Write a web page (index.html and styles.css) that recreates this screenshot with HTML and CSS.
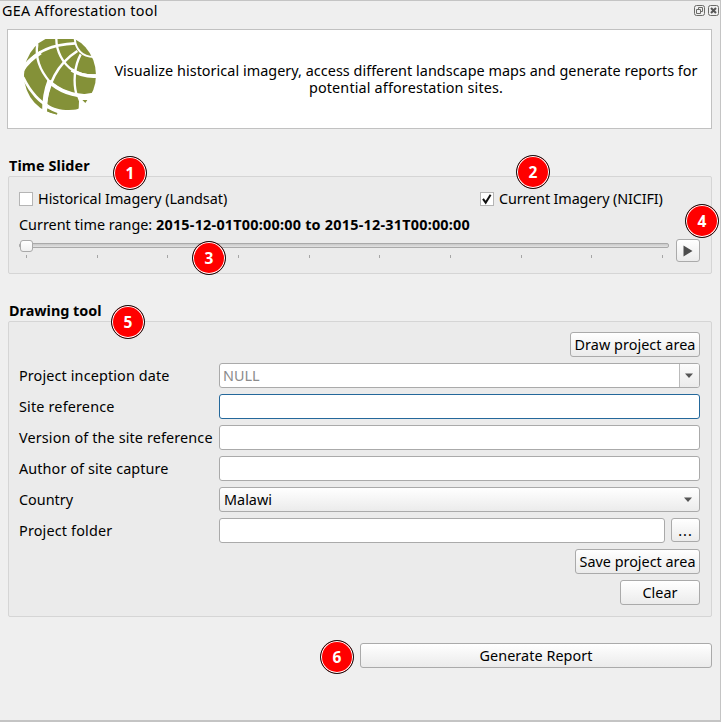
FILE: index.html
```html
<!DOCTYPE html>
<html lang="en">
<head>
<meta charset="utf-8">
<title>GEA Afforestation tool</title>
<link rel="stylesheet" href="styles.css">
</head>
<body>
<main class="dock">
  <header class="titlebar">
    <span class="t-title">GEA Afforestation tool</span>
    <span class="window-buttons">
      <svg width="11" height="11" viewBox="0 0 11 11"><rect x=".5" y=".5" width="10" height="10" rx="2" class="frame"/><path d="M4.5 4.5v-2h4v4h-2M2.5 4.5h4v4h-4z" class="frame"/></svg>
      <svg width="11" height="11" viewBox="0 0 11 11"><rect x=".5" y=".5" width="10" height="10" rx="2" class="frame"/><path d="M3 3l5 5M8 3L3 8" class="cross"/></svg>
    </span>
  </header>

  <section class="intro">
    <svg class="logo" width="72" height="76" viewBox="42 27 216 228">
      <ellipse cx="150" cy="135" rx="108" ry="118" fill="#849138"/>
      <g fill="none" stroke="#fff">
        <path d="M38 117C64 76 112 43 196 40" stroke-width="8"/>
        <path d="M38 120C52 96 70 82 92 68" stroke-width="11"/>
        <path d="M139 24C138 62 158 101 189 121C209 134 235 138 262 136" stroke-width="7"/>
        <path d="M185 120C210 136 235 140 262 138" stroke-width="11"/>
        <path d="M82 42C75 85 94 126 119 155C146 181 180 196 236 201" stroke-width="7"/>
        <path d="M117 154C147 183 185 199 245 198" stroke-width="11"/>
        <path d="M202 63C158 91 112 146 104 246" stroke-width="8"/>
        <path d="M120 151C108 181 103 212 104 248" stroke-width="15"/>
        <path d="M194 24C196 56 215 82 254 81" stroke-width="6"/>
        <path d="M212 73C192 110 190 158 199 192" stroke-width="7"/>
        <path d="M40 143C63 191 93 218 112 226" stroke-width="8"/>
      </g>
      <path d="M112 222C135 238 165 244 206 238L207 214L200 196L262 186V260H142V252L110 236z" fill="#fff"/>
      <path d="M112 235Q126 244 142 249L141 254Q126 252 112 244zM217 210h15l-6 9z" fill="#849138"/>
    </svg>
    <p class="intro-text"><span class="t-intro1">Visualize historical imagery, access different landscape maps and generate reports for</span><span class="t-intro2">potential afforestation sites.</span></p>
  </section>

  <h2 class="group-title t-slider">Time Slider</h2>
  <section class="group time-group">
    <div class="checks">
      <label class="check"><span class="box"></span><span class="t-hist">Historical Imagery (Landsat)</span></label>
      <label class="check"><span class="box"><svg width="12" height="12" viewBox="0 0 12 12"><path d="M2 5.8L4.7 9.6L9.6 1.8" fill="none" stroke="#111" stroke-width="2"/></svg></span><span class="t-curr">Current Imagery (NICIFI)</span></label>
    </div>
    <p class="range"><span class="t-range">Current time range: </span><b class="t-dates">2015-12-01T00:00:00 to 2015-12-31T00:00:00</b></p>
    <div class="slider-row">
      <div class="slider">
        <div class="track"><span class="handle"></span></div>
        <div class="ticks"><i></i><i></i><i></i><i></i><i></i><i></i><i></i><i></i><i></i><i></i></div>
      </div>
      <button class="btn play"><svg width="10" height="12" viewBox="0 0 10 12"><path d="M.5 .5L9.5 6L.5 11.5z" fill="#4d4d4d"/></svg></button>
    </div>
  </section>

  <h2 class="group-title t-drawing">Drawing tool</h2>
  <section class="group form">
    <div class="row end"><button class="btn w130"><span class="t-draw">Draw project area</span></button></div>
    <div class="row"><span class="label t-l1">Project inception date</span><div class="field date"><span class="t-null">NULL</span><span class="drop"><svg width="8" height="5" viewBox="0 0 8 5"><path d="M0 .5h8L4 5z" fill="#555"/></svg></span></div></div>
    <div class="row"><span class="label t-l2">Site reference</span><div class="field focus"></div></div>
    <div class="row"><span class="label t-l3">Version of the site reference</span><div class="field"></div></div>
    <div class="row"><span class="label t-l4">Author of site capture</span><div class="field"></div></div>
    <div class="row"><span class="label t-l5">Country</span><div class="field combo"><span class="t-mal">Malawi</span><svg width="8" height="5" viewBox="0 0 8 5"><path d="M0 .5h8L4 5z" fill="#555"/></svg></div></div>
    <div class="row"><span class="label t-l6">Project folder</span><div class="field"></div><button class="btn browse">...</button></div>
    <div class="row end"><button class="btn w125"><span class="t-save">Save project area</span></button></div>
    <div class="row end"><button class="btn w80"><span class="t-clear">Clear</span></button></div>
  </section>

  <footer class="footer"><button class="btn generate"><span class="t-gen">Generate Report</span></button></footer>

  <span class="badge b1">1</span>
  <span class="badge b2">2</span>
  <span class="badge b3">3</span>
  <span class="badge b4">4</span>
  <span class="badge b5">5</span>
  <span class="badge b6">6</span>
</main>
</body>
</html>
```
FILE: styles.css
```css
* { box-sizing: border-box; }
body { margin: 0; }
.dock {
  position: relative;
  width: 721px;
  height: 722px;
  padding: 0 8px 0 7px;
  overflow: hidden;
  background: #efefef;
  border: solid #c4c4c4;
  border-width: 1px 1px 2px 0;
  color: #000;
  font: 14.4px/17px "Noto Sans", sans-serif;
  white-space: nowrap;
}
.titlebar {
  display: flex;
  justify-content: space-between;
  height: 28px;
  margin: 0 -7px 0 -5px;
  padding-top: 1px;
}
.window-buttons { display: flex; gap: 3px; padding: 3px 0 0; }
.frame { fill: none; stroke: #6b6b68; }
.cross { stroke: #555; stroke-width: 2; }
.intro {
  display: flex;
  width: 705px;
  height: 100px;
  padding: 9px 13px 0 16px;
  background: #fff;
  border: 1px solid #c1c1c1;
}
.logo { flex: none; }
.intro-text { flex: 1; margin: 23px 0 0 18px; text-align: center; }
.intro-text span { display: block; }
.group-title { height: 17px; margin: 28px 0 0 2px; font-size: 14.4px; line-height: 17px; font-weight: 700; }
.group {
  width: 704px;
  margin-left: 1px;
  padding: 0 11px 0 10px;
  background: #ebebeb;
  border: 1px solid #d5d5d5;
  border-radius: 2px;
}
.time-group { height: 98px; margin-top: 2px; padding-top: 13px; }
.checks { display: grid; grid-template-columns: 461px 1fr; height: 18px; }
.check { display: flex; align-items: center; gap: 5px; }
.check > span:last-child { margin-top: -2px; }
.box { display: flex; width: 14px; height: 14px; background: #fff; border: 1px solid #b5b5b5; }
.range { margin: 8px 0 0; white-space: pre; }
.slider-row { display: flex; justify-content: space-between; margin-top: 6px; }
.slider { width: 650px; padding-top: 4px; }
.track {
  width: 650px;
  height: 5px;
  border: 1px solid #a9a9a9;
  border-radius: 2px;
  background: linear-gradient(#c8c8c8, #e2e2e2);
}
.handle {
  display: block;
  position: relative;
  top: -4px;
  width: 13px;
  height: 12px;
  background: linear-gradient(#fff, #f0f0f0);
  border: 1px solid #a9a9a9;
  border-radius: 3px;
}
.ticks { display: flex; justify-content: space-between; margin: 7px 6px 0 7px; }
.ticks i { width: 1px; height: 3px; background: #a5a5a5; }
.btn {
  display: flex;
  align-items: center;
  justify-content: center;
  height: 25px;
  padding: 0;
  background: linear-gradient(#fff, #ebebeb);
  border: 1px solid #aaa;
  border-radius: 3px;
  color: #000;
  font: inherit;
}
.play { width: 24px; height: 23px; }
.form { display: grid; grid-auto-rows: 25px; row-gap: 6px; align-content: start; height: 296px; padding-top: 10px; }
.group-title.t-drawing { margin-top: 28px; margin-bottom: 2px; }
.row { display: flex; }
.end { justify-content: flex-end; }
.label { flex: none; width: 200px; padding-top: 4px; }
.field {
  display: flex;
  flex: 1;
  height: 25px;
  padding-left: 4px;
  background: #fff;
  border: 1px solid #aaa;
  border-radius: 3px;
  line-height: 23px;
}
.focus { border-color: #24689b; }
.date { justify-content: space-between; padding-left: 3px; color: #8b8b8b; }
.drop {
  display: flex;
  align-items: center;
  justify-content: center;
  width: 20px;
  padding-right: 2px;
  background: linear-gradient(#fcfcfc, #ebebeb);
  border-left: 1px solid #bbb;
  border-radius: 0 2px 2px 0;
}
.combo { align-items: center; justify-content: space-between; padding-right: 7px; background: linear-gradient(#fff, #ebebeb); }
.browse { width: 29px; height: 24px; margin-left: 6px; letter-spacing: 1px; }
.w130 { width: 130px; }
.w125 { width: 125px; }
.w80 { width: 80px; }
.footer { display: flex; justify-content: flex-end; width: 705px; margin-top: 26px; }
.generate { width: 352px; }

/* tracking */
.t-title { letter-spacing: .27px; }
.t-intro1 { letter-spacing: .035px; }
.t-intro2 { letter-spacing: .15px; }
.t-slider { letter-spacing: .1px; }
.t-hist { letter-spacing: -.02px; }
.t-curr { letter-spacing: -.12px; }
.t-dates { letter-spacing: .23px; }
.t-l1, .t-l3 { letter-spacing: .13px; }
.t-l2, .t-l6 { letter-spacing: .17px; }
.t-l4 { letter-spacing: .1px; }
.t-draw, .t-gen { letter-spacing: .05px; }

.badge {
  position: absolute;
  width: 34px;
  height: 34px;
  background: #f00;
  border: 1px solid #111;
  border-radius: 50%;
  box-shadow: inset 0 0 0 1px #fff;
  color: #fff;
  font: 700 15.5px/32px "Noto Sans", sans-serif;
  text-align: center;
}
.b1 { left: 113px; top: 155px; }
.b2 { left: 516px; top: 154px; }
.b3 { left: 192px; top: 240px; }
.b4 { left: 685px; top: 203px; }
.b5 { left: 111px; top: 304px; }
.b6 { left: 320px; top: 639px; }
```
